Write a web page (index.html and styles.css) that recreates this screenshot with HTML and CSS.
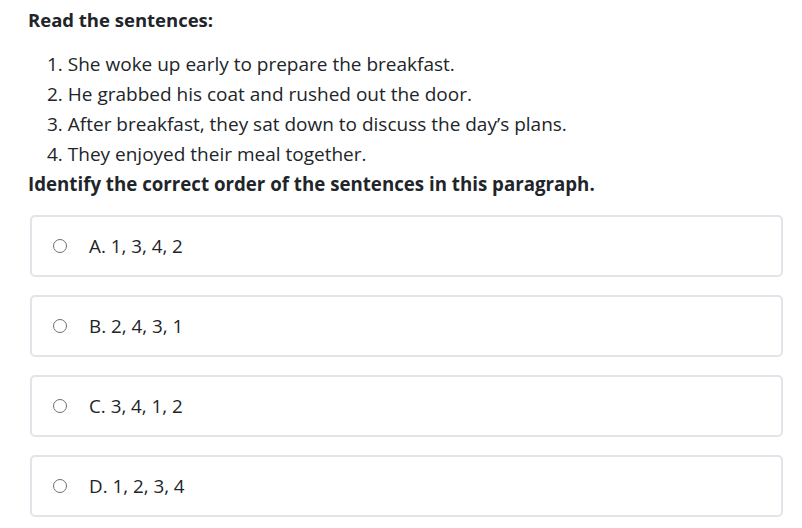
FILE: index.html
```html
<!DOCTYPE html>
<html>
<head>
<meta charset="utf-8">
<link rel="stylesheet" href="styles.css">
</head>
<body>
<div class="page">
  <p class="title">Read the sentences:</p>
  <ol class="sentences">
    <li>She woke up early to prepare the breakfast.</li>
    <li>He grabbed his coat and rushed out the door.</li>
    <li>After breakfast, they sat down to discuss the day’s plans.</li>
    <li>They enjoyed their meal together.</li>
  </ol>
  <p class="question">Identify the correct order of the sentences in this paragraph.</p>
  <div class="options">
    <label class="option"><span class="radio"></span><span class="text">A. 1, 3, 4, 2</span></label>
    <label class="option"><span class="radio"></span><span class="text">B. 2, 4, 3, 1</span></label>
    <label class="option"><span class="radio"></span><span class="text">C. 3, 4, 1, 2</span></label>
    <label class="option"><span class="radio"></span><span class="text">D. 1, 2, 3, 4</span></label>
  </div>
</div>
</body>
</html>
```
FILE: styles.css
```css
html, body {
  margin: 0;
  padding: 0;
  background: #fff;
}
.page {
  font-family: "Open Sans", "Noto Sans", sans-serif;
  color: #212529;
  padding: 6px 19px 0 28px;
}
.title {
  margin: 0;
  font-size: 18.5px;
  font-weight: 700;
  line-height: 28px;
}
.sentences {
  margin: 15px 0 0 0;
  padding-left: 19px;
  font-size: 19px;
  line-height: 30px;
  list-style-position: inside;
}
.question {
  margin: 0;
  font-size: 18.7px;
  font-weight: 700;
  line-height: 30px;
}
.options {
  margin: 16px 0 0 2px;
  display: flex;
  flex-direction: column;
  gap: 18px;
}
.option {
  display: flex;
  align-items: center;
  height: 62px;
  box-sizing: border-box;
  border: 2px solid #e1e4e9;
  border-radius: 5px;
  padding-left: 21px;
  font-size: 18.8px;
}
.radio {
  width: 14px;
  height: 14px;
  box-sizing: border-box;
  border: 1px solid #6f6f6f;
  border-radius: 50%;
  margin-right: 22px;
  flex: none;
}
```
